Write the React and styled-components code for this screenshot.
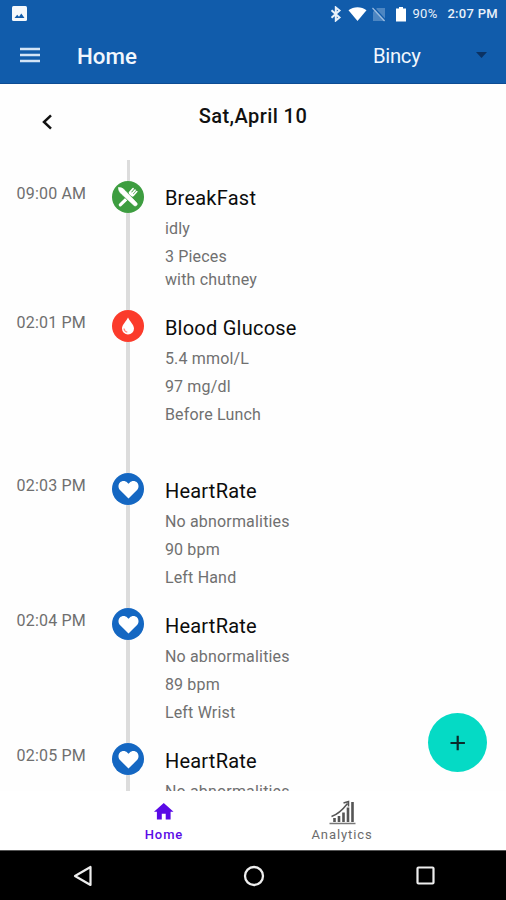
import React from "react";
import styled, { createGlobalStyle } from "styled-components";

const GlobalStyle = createGlobalStyle`
  * {
    box-sizing: border-box;
  }
  body {
    margin: 0;
    font-family: Roboto, "Liberation Sans", sans-serif;
    background: #fff;
  }
  svg {
    display: block;
    flex-shrink: 0;
  }
`;
const Screen = styled.div`
  display: flex;
  flex-direction: column;
  width: 506px;
  height: 900px;
  overflow: hidden;
  background: #fefefe;
`;
const StatusBar = styled.div`
  display: flex;
  align-items: center;
  height: 27px;
  padding: 0 8px 0 12px;
  background: #115cab;
  color: #e9f1fa;
`;
const StatusIcons = styled.div`
  display: flex;
  align-items: center;
  margin-left: auto;
`;
const Battery = styled.span`
  font-size: 13px;
  line-height: 27px;
  letter-spacing: 0.4px;
  margin-left: 5.5px;
  width: 35px;
`;
const Clock = styled.span`
  font-size: 13px;
  font-weight: 500;
  line-height: 27px;
  letter-spacing: 0.3px;
`;
const Toolbar = styled.header`
  display: flex;
  align-items: center;
  height: 57px;
  padding: 0 19px 0 20px;
  background: #115cab;
  border-bottom: 1px solid #0d4c93;
  color: #f1f7fd;
`;
const Title = styled.h1`
  margin: 0 0 0 37px;
  padding-top: 1px;
  font-size: 22.3px;
  font-weight: 500;
  line-height: 26px;
  width: 296px;
`;
const UserName = styled.span`
  flex: 1;
  padding-top: 2px;
  font-size: 20.3px;
  line-height: 26px;
  letter-spacing: -0.3px;
`;
const DateRow = styled.div`
  display: grid;
  grid-template-columns: 94px 1fr 94px;
  height: 76px;
  flex-shrink: 0;
`;
const BackButton = styled.button`
  display: flex;
  justify-content: center;
  align-items: center;
  height: 75px;
  padding: 0;
  border: 0;
  background: none;
`;
const DateText = styled.h2`
  margin: 0;
  padding-top: 20px;
  font-size: 20px;
  font-weight: 500;
  line-height: 24px;
  letter-spacing: 0.42px;
  text-align: center;
  color: #111;
`;
const Timeline = styled.main`
  flex: 1;
  min-height: 0;
  overflow: hidden;
`;
const Entry = styled.div`
  display: grid;
  grid-template-columns: 95.6px 32px 1fr;
  height: ${(props) => props.$height}px;
  padding-left: 16.6px;
`;
const Time = styled.span`
  padding-top: 2.5px;
  font-size: 16px;
  line-height: 20px;
  letter-spacing: 0.18px;
  color: #6f6f6f;
`;
const Rail = styled.div`
  display: flex;
  flex-direction: column;
  align-items: center;
`;
const Stem = styled.div`
  flex: 1;
  width: 3.4px;
  background: #dcdcdc;
`;
const LeadStem = styled(Stem)`
  height: 21px;
  margin-left: 126.6px;
`;
const Dot = styled.div`
  display: flex;
  justify-content: center;
  align-items: center;
  width: 32px;
  height: 32px;
  border-radius: 50%;
  background: ${(props) => props.$color};
`;
const Info = styled.div`
  display: flex;
  flex-direction: column;
  gap: 5px;
  padding: 5.3px 0 0 20.7px;
`;
const EntryTitle = styled.h3`
  margin: 0 0 2px;
  font-size: 20px;
  font-weight: 400;
  line-height: 24px;
  letter-spacing: 0.24px;
  color: #0c0c0c;
`;
const Detail = styled.p`
  margin: 0;
  font-size: 16px;
  line-height: 23px;
  letter-spacing: 0.18px;
  white-space: pre-line;
  color: #707070;
`;
const AddButton = styled.button`
  position: absolute;
  left: 428px;
  top: 713px;
  display: flex;
  justify-content: center;
  align-items: center;
  width: 59px;
  height: 59px;
  padding: 0;
  border: 0;
  border-radius: 50%;
  background: #05dac5;
`;
const BottomNav = styled.nav`
  display: flex;
  justify-content: center;
  height: 59px;
  flex-shrink: 0;
  background: #fff;
`;
const Tab = styled.a`
  display: flex;
  flex-direction: column;
  align-items: center;
  width: 178px;
  color: ${(props) => (props.$active ? "#5a0be6" : "#6c6c6c")};
`;
const TabIcon = styled.span`
  display: flex;
  align-items: center;
  height: 36px;
  padding-top: 6px;
`;
const TabLabel = styled.span`
  font-size: 13px;
  font-weight: ${(props) => (props.$active ? 500 : 400)};
  line-height: 16px;
  letter-spacing: 0.9px;
`;
const SystemNav = styled.div`
  display: flex;
  justify-content: space-between;
  align-items: center;
  height: 50px;
  padding: 0 71px 0 73px;
  background: #000;
  border-top: 1px solid #555;
`;
const HomeKey = styled.svg`
  margin-right: 2px;
`;

const HeartIcon = () => (
  <svg width="21" height="19" viewBox="0 0 22 20">
    <path
      fill="#fff"
      d="M11 19.500 2 10.600C0 8.500-.1 4.600 2 2.500 4.100.4 7.600.4 9.600 2.500L11 3.900l1.400-1.400c2-2.100 5.500-2.100 7.600 0s2 6 0 8.100z"
    />
  </svg>
);
const DropIcon = () => (
  <svg width="14" height="18" viewBox="0 0 14 18">
    <path fill="#fff" d="M7 .5C9 4.500 13 8 13 11.500a6 6 0 0 1-12 0C1 8 5 4.500 7 .5z" />
    <path fill="none" stroke="#ff8a80" strokeWidth="1.300" d="M3 11.500c.2 2 1.300 3.200 3.300 3.600" />
  </svg>
);
const CutleryIcon = () => (
  <svg width="24" height="24" viewBox="0 0 24 24" fill="none" stroke="#fff" strokeLinecap="round">
    <path strokeWidth="3.200" d="M4.300 19.800 14 10.500" />
    <path strokeWidth="1.600" d="m13.500 7.600 3.600-4M15.500 9.100l3.600-4M17.300 10.500l3.500-4" />
    <path strokeWidth="3.200" d="m14.500 8.600 1.800 1.400" />
    <path stroke="#3d9d40" strokeWidth="6" strokeLinecap="butt" d="M4.500 4.500 19 19" />
    <path
      fill="#fff"
      stroke="#fff"
      strokeWidth=".6"
      d="M2.600 2.800C5 2 7 3.500 9 5.600L20.700 17.800c1.600 1.900-.8 4.200-2.700 2.600L5.800 9.300C3.500 7.200 2.200 5.200 2.600 2.800z"
    />
  </svg>
);

const kinds = {
  food: { color: "#3d9d40", Icon: CutleryIcon },
  glucose: { color: "#fb3b2b", Icon: DropIcon },
  heart: { color: "#1467c2", Icon: HeartIcon },
};

const entries = [
  { time: "09:00 AM", kind: "food", title: "BreakFast", details: ["idly", "3 Pieces\nwith chutney"], height: 129.4 },
  { time: "02:01 PM", kind: "glucose", title: "Blood Glucose", details: ["5.4 mmol/L", "97 mg/dl", "Before Lunch"], height: 163.1 },
  { time: "02:03 PM", kind: "heart", title: "HeartRate", details: ["No abnormalities", "90 bpm", "Left Hand"], height: 135 },
  { time: "02:04 PM", kind: "heart", title: "HeartRate", details: ["No abnormalities", "89 bpm", "Left Wrist"], height: 135 },
  { time: "02:05 PM", kind: "heart", title: "HeartRate", details: ["No abnormalities"], height: 135 },
];

function TimelineEntry({ time, kind, title, details, height }) {
  const { color, Icon } = kinds[kind];
  return (
    <Entry $height={height}>
      <Time>{time}</Time>
      <Rail>
        <Dot $color={color}>
          <Icon />
        </Dot>
        <Stem />
      </Rail>
      <Info>
        <EntryTitle>{title}</EntryTitle>
        {details.map((line) => (
          <Detail key={line}>{line}</Detail>
        ))}
      </Info>
    </Entry>
  );
}

function App() {
  return (
    <Screen>
      <GlobalStyle />
      <StatusBar>
        <svg width="15" height="15" viewBox="0 0 15 15">
          <rect width="15" height="15" rx="1.500" fill="#f4f8fc" />
          <path fill="#115cab" d="m2.500 12 2.700-3.300 1.800 2L9.300 7.500l3.200 4.500z" />
        </svg>
        <StatusIcons>
          <svg width="77" height="16" viewBox="0 0 77 16">
            <path
              fill="none"
              stroke="#e9f1fa"
              strokeWidth="2"
              d="m1.500 4.300 8 7.200L5.800 14.500v-13l3.700 3-8 7.200"
            />
            <path fill="#fff" d="M18.500 4.200C23.500.2 31.500.2 36.500 4.200L27.500 15z" />
            <path fill="#4d86c2" d="M47 2h8v13H43V6z" />
            <path stroke="#115cab" strokeWidth="1.200" d="m43.500 1 12 13" />
            <path stroke="#9dbde0" strokeWidth="1.200" d="m42.500 2 12 13" />
            <path fill="#fff" d="M66 2.500h3V1h4v1.500h3V15.500H66z" />
          </svg>
          <Battery>90%</Battery>
          <Clock>2:07 PM</Clock>
        </StatusIcons>
      </StatusBar>
      <Toolbar>
        <svg width="20" height="16" viewBox="0 0 20 16">
          <path stroke="#d3e4f6" strokeWidth="2.500" d="M0 2h20M0 8h20M0 14h20" />
        </svg>
        <Title>Home</Title>
        <UserName>Bincy</UserName>
        <svg width="11" height="6" viewBox="0 0 11 6">
          <path fill="#0b3263" d="M0 0h11L5.500 6z" />
        </svg>
      </Toolbar>
      <DateRow>
        <BackButton>
          <svg width="10" height="16" viewBox="0 0 10 16">
            <path fill="none" stroke="#111" strokeWidth="2.500" d="M9 1.300 2 8l7 6.700" />
          </svg>
        </BackButton>
        <DateText>Sat,April 10</DateText>
      </DateRow>
      <Timeline>
        <LeadStem />
        {entries.map((entry) => (
          <TimelineEntry key={entry.time} {...entry} />
        ))}
      </Timeline>
      <AddButton>
        <svg width="16" height="16" viewBox="0 0 16 16">
          <path stroke="#0a2a2a" strokeWidth="2.200" d="M7.700.8v14.400M.5 8h14.400" />
        </svg>
      </AddButton>
      <BottomNav>
        <Tab $active>
          <TabIcon>
            <svg width="23.500" height="23.500" viewBox="0 0 24 24">
              <path fill="currentColor" d="M10 20v-6h4v6h5v-8h3L12 3 2 12h3v8z" />
            </svg>
          </TabIcon>
          <TabLabel $active>Home</TabLabel>
        </Tab>
        <Tab>
          <TabIcon>
            <svg width="27" height="25" viewBox="0 0 27 25">
              <path
                fill="none"
                stroke="#555"
                strokeWidth="2.600"
                d="M5.500 22v-4M10 22v-6M14.500 22V12.500M19 22V7.500M23.500 22V2"
              />
              <path stroke="#777" strokeWidth="1.500" d="M.5 23.500h26" />
              <path fill="none" stroke="#555" strokeWidth="1.500" d="M2.500 16.500c6-2 11-6.500 16-13M14.500 3l5-1.500v5" />
            </svg>
          </TabIcon>
          <TabLabel>Analytics</TabLabel>
        </Tab>
      </BottomNav>
      <SystemNav>
        <svg width="20" height="22" viewBox="0 0 20 22">
          <path fill="none" stroke="#eee" strokeWidth="2.200" strokeLinejoin="round" d="M17.500 2v18L2 11z" />
        </svg>
        <HomeKey width="22" height="22" viewBox="0 0 22 22">
          <circle cx="11" cy="11" r="9" fill="none" stroke="#eee" strokeWidth="2.300" />
        </HomeKey>
        <svg width="19" height="19" viewBox="0 0 19 19">
          <rect x="1.500" y="1.500" width="16" height="16" rx="1" fill="none" stroke="#eee" strokeWidth="2.200" />
        </svg>
      </SystemNav>
    </Screen>
  );
}

export default App;
